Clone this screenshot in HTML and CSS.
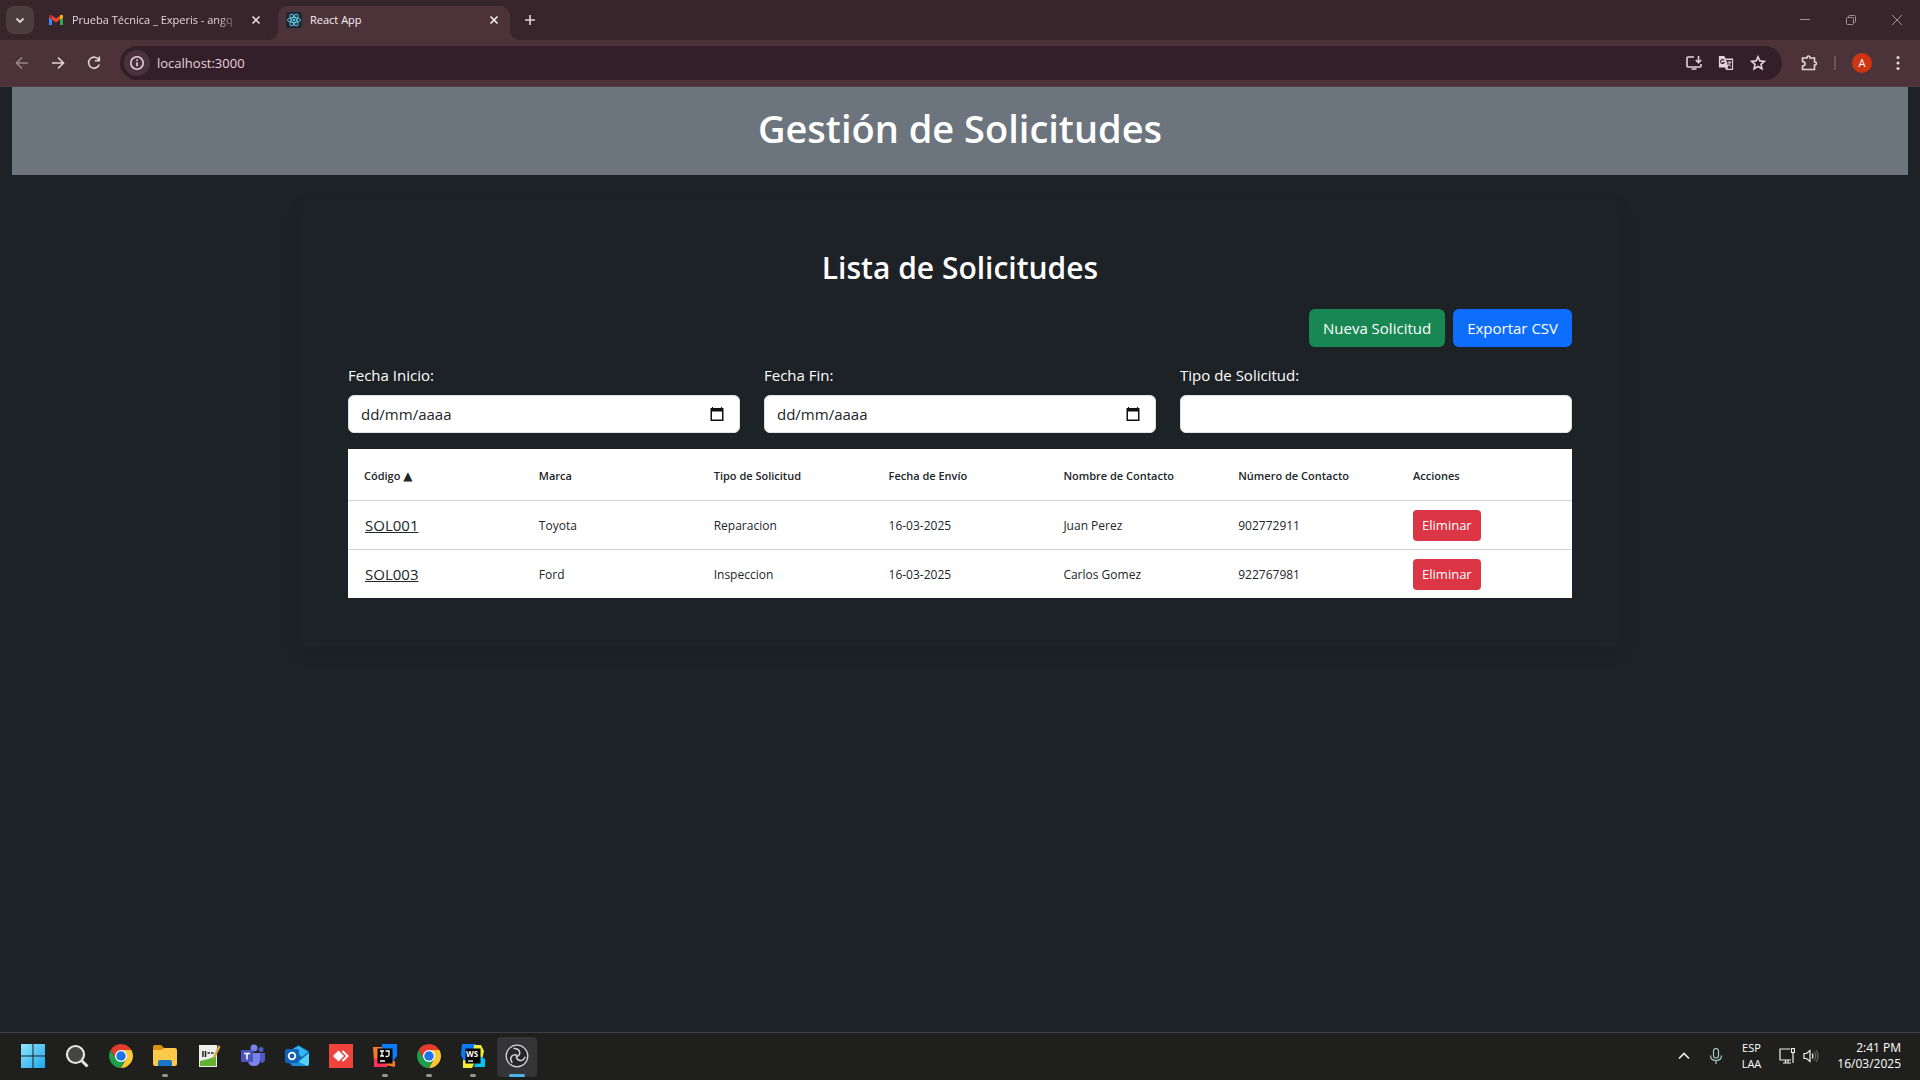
FILE: index.html
```html
<!DOCTYPE html>
<html lang="es">
<head>
<meta charset="utf-8">
<meta name="viewport" content="width=device-width, initial-scale=1">
<title>React App</title>
<link rel="stylesheet" href="styles.css">
</head>
<body>
<svg class="defs" aria-hidden="true">
  <symbol id="chrome" viewBox="0 0 48 48">
    <circle cx="24" cy="24" r="13" fill="#fff"/>
    <path d="M24 12H44.78A24 24 0 0 0 3.22 12L13.61 30A12 12 0 0 1 24 12Z" fill="#e33b2e"/>
    <path d="M13.61 30L3.22 12A24 24 0 0 0 24 48L34.39 30A12 12 0 0 1 13.61 30Z" fill="#1e9e4a"/>
    <path d="M34.39 30L24 48A24 24 0 0 0 44.78 12H24A12 12 0 0 1 34.39 30Z" fill="#fcc934"/>
    <circle cx="24" cy="24" r="9.5" fill="#1a73e8"/>
  </symbol>
  <symbol id="cross" viewBox="0 0 16 16"><path d="M4.5 4.500l7 7M11.500 4.500l-7 7" fill="none" stroke="currentColor" stroke-width="1.6"/></symbol>
  <symbol id="calendar" viewBox="0 0 16 16"><path d="M3 1h1v1h8V1h1v1h1.500v13h-13V2H3zM3 5.500v8h10v-8z" fill="#111" fill-rule="evenodd"/></symbol>
</svg>

<header class="browser">
  <div class="tabstrip">
    <button class="tab-search" aria-label="Buscar pestañas"><svg viewBox="0 0 16 16"><path d="M4.500 6.500L8 10l3.500-3.500" fill="none" stroke="currentColor" stroke-width="1.800"/></svg></button>
    <div class="tab tab-mail">
      <svg class="icon" viewBox="0 0 16 16"><path d="M1 4v9h3V7z" fill="#4285f4"/><path d="M15 4v9h-3V7z" fill="#34a853"/><path d="M4 3.500L8 6.500l4-3v4L8 10.500 4 7.500z" fill="#ea4335"/><path d="M1 4.500C1 2.500 3 2.500 4 3.500v4L1 5.500z" fill="#c5221f"/><path d="M15 4.500c0-2-2-2-3-1v4l3-2z" fill="#fbbc04"/></svg>
      <span class="tab-title fade">Prueba Técnica _ Experis - angq</span>
      <button class="tab-close" aria-label="Cerrar"><svg class="icon"><use href="#cross"/></svg></button>
    </div>
    <div class="tab tab-active">
      <svg class="icon" viewBox="0 0 16 16"><rect width="16" height="16" rx="2" fill="#1d2830"/><g fill="none" stroke="#61c7e0" stroke-width="1"><ellipse cx="8" cy="8" rx="6.500" ry="2.500"/><ellipse cx="8" cy="8" rx="6.500" ry="2.500" transform="rotate(60 8 8)"/><ellipse cx="8" cy="8" rx="6.500" ry="2.500" transform="rotate(120 8 8)"/></g><circle cx="8" cy="8" r="1.300" fill="#61c7e0"/></svg>
      <span class="tab-title">React App</span>
      <button class="tab-close" aria-label="Cerrar"><svg class="icon"><use href="#cross"/></svg></button>
    </div>
    <button class="new-tab" aria-label="Nueva pestaña"><svg class="icon" viewBox="0 0 16 16"><path d="M8 3v10M3 8h10" stroke="currentColor" stroke-width="1.600"/></svg></button>
    <div class="window-controls">
      <button aria-label="Minimizar"><svg viewBox="0 0 12 12"><path d="M1 5.500h10" stroke="currentColor"/></svg></button>
      <button aria-label="Restaurar"><svg viewBox="0 0 12 12"><path d="M3.500 3V2.500q0-1 1-1h5q1 0 1 1v5q0 1-1 1H9M2.500 3.500h5q1 0 1 1v5q0 1-1 1h-5q-1 0-1-1v-5q0-1 1-1z" fill="none" stroke="currentColor"/></svg></button>
      <button aria-label="Cerrar ventana"><svg viewBox="0 0 12 12"><path d="M1 1l10 10M11 1L1 11" stroke="currentColor"/></svg></button>
    </div>
  </div>
  <div class="toolbar">
    <button class="nav dim" aria-label="Atrás"><svg viewBox="0 0 16 16"><path d="M14 8H3M8 2.500L2.500 8 8 13.500"/></svg></button>
    <button class="nav" aria-label="Adelante"><svg viewBox="0 0 16 16"><path d="M2 8h11M8 2.500L13.500 8 8 13.500"/></svg></button>
    <button class="nav" aria-label="Recargar"><svg viewBox="0 0 16 16"><path d="M12.800 4.800A5.500 5.500 0 1 0 13.300 9.500M13.300 1.500v4.300H9"/></svg></button>
    <div class="omnibox">
      <button class="site-info" aria-label="Información del sitio"><svg viewBox="0 0 16 16"><circle cx="8" cy="8" r="6.200"/><path d="M8 7.300v4M8 4.500v1.500"/></svg></button>
      <input class="url" aria-label="Dirección" value="localhost:3000">
      <button class="nav" aria-label="Instalar"><svg viewBox="0 0 16 16"><path d="M8 2H2q-1 0-1 1v8q0 1 1 1h12q1 0 1-1V9M5.500 14h5M12.500 1v6.500M9.800 5l2.700 2.700L15.200 5"/></svg></button>
      <button class="nav" aria-label="Traducir"><svg viewBox="0 0 18 16"><path d="M1 0h6l1.500 3H17v13H9l-1-3H1z" fill="#e6d3d9" stroke="none"/><path d="M9 4.500h6.800v10H10.500L11.500 12z" fill="#36212b" stroke="none"/><path d="M6.800 5A2.200 2.200 0 1 0 7 7.500H5" stroke="#36212b" stroke-width="1.200"/><path d="M10.500 7h4.500M12.700 6v1M14 7q-1 3-3 4.500M11.500 8.500l3 3.500" stroke-width="1.100"/></svg></button>
      <button class="nav" aria-label="Favorito"><svg viewBox="0 0 16 16"><path d="M8 1.800l1.900 4.100 4.500.5-3.400 3 1 4.400L8 11.500l-4 2.300 1-4.400-3.400-3 4.500-.5z"/></svg></button>
    </div>
    <button class="nav ext" aria-label="Extensiones"><svg viewBox="0 0 16 16"><path d="M1.500 3H6q0-2 1.500-2T9 3h4.500v4Q15.500 7 15.500 8.500T13.500 10v4.500h-12V11q2.500 0 2.500-2.200T1.500 6.500z"/></svg></button>
    <span class="divider"></span>
    <button class="avatar" aria-label="Perfil">A</button>
    <button class="nav menu" aria-label="Menú"><svg viewBox="0 0 16 16"><g fill="#e6d3d9" stroke="none"><circle cx="8" cy="2.500" r="1.600"/><circle cx="8" cy="8" r="1.600"/><circle cx="8" cy="13.500" r="1.600"/></g></svg></button>
  </div>
</header>

<main class="page">
  <h1 class="banner">Gestión de Solicitudes</h1>
  <section class="panel">
    <h2 class="panel-title">Lista de Solicitudes</h2>
    <div class="actions">
      <button class="btn btn-success">Nueva Solicitud</button>
      <button class="btn btn-primary">Exportar CSV</button>
    </div>
    <form class="filters">
      <div class="field">
        <label for="inicio">Fecha Inicio:</label>
        <div class="control"><input id="inicio" type="text" placeholder="dd/mm/aaaa"><button type="button" aria-label="Abrir calendario"><svg class="icon"><use href="#calendar"/></svg></button></div>
      </div>
      <div class="field">
        <label for="fin">Fecha Fin:</label>
        <div class="control"><input id="fin" type="text" placeholder="dd/mm/aaaa"><button type="button" aria-label="Abrir calendario"><svg class="icon"><use href="#calendar"/></svg></button></div>
      </div>
      <div class="field">
        <label for="tipo">Tipo de Solicitud:</label>
        <div class="control"><input id="tipo" type="text"></div>
      </div>
    </form>
    <table class="requests">
      <thead>
        <tr><th>Código <span class="sort">▲</span></th><th>Marca</th><th>Tipo de Solicitud</th><th>Fecha de Envío</th><th>Nombre de Contacto</th><th>Número de Contacto</th><th>Acciones</th></tr>
      </thead>
      <tbody>
        <tr><td><a href="#SOL001">SOL001</a></td><td>Toyota</td><td>Reparacion</td><td>16-03-2025</td><td>Juan Perez</td><td>902772911</td><td class="cell-action"><button class="btn-delete">Eliminar</button></td></tr>
        <tr><td><a href="#SOL003">SOL003</a></td><td>Ford</td><td>Inspeccion</td><td>16-03-2025</td><td>Carlos Gomez</td><td>922767981</td><td class="cell-action"><button class="btn-delete">Eliminar</button></td></tr>
      </tbody>
    </table>
  </section>
</main>

<footer class="taskbar">
  <nav class="apps">
    <button class="app" aria-label="Inicio"><svg viewBox="0 0 24 24"><defs><linearGradient id="win" x2="1" y2="1"><stop stop-color="#8fe6fb"/><stop offset="1" stop-color="#1ea5ee"/></linearGradient></defs><path d="M0 0h11.500v11.500H0zM12.500 0H24v11.500H12.500zM0 12.500h11.500V24H0zM12.500 12.500H24V24H12.500z" fill="url(#win)"/></svg></button>
    <button class="app" aria-label="Buscar"><svg viewBox="0 0 24 24"><circle cx="10.500" cy="10.500" r="8.500" fill="#454544" stroke="#e8e6e2" stroke-width="2.200"/><path d="M17 17l5.500 5.500" stroke="#e8e6e2" stroke-width="3"/></svg></button>
    <button class="app" aria-label="Chrome"><svg><use href="#chrome"/></svg></button>
    <button class="app open" aria-label="Explorador"><svg viewBox="0 0 24 24"><path d="M0 3q0-2 2-2h6l3 3h11v6H0z" fill="#d9930f"/><path d="M0 6h9l2-2h11q2 0 2 2v14q0 2-2 2H2q-2 0-2-2z" fill="#fcca4b"/><path d="M5 22v-4q0-2 2-2h10q2 0 2 2v4z" fill="#1975c5"/></svg></button>
    <button class="app" aria-label="Notepad++"><svg viewBox="0 0 24 24"><path d="M2 1h18v22H2z" fill="#eeeeea"/><path d="M3 17q8-1 16-5v10H3z" fill="#62b22f"/><path d="M6 7v6M8.500 7v6M10.500 9h2.500M14 9h2.500" stroke="#222" stroke-width="1.500"/><path d="M21.500 1L16.500 12l-.5 3 2.500-2L23.500 3z" fill="#d6a83c"/></svg></button>
    <button class="app" aria-label="Teams"><svg viewBox="0 0 24 24"><circle cx="13" cy="4" r="3.500" fill="#7b83eb"/><circle cx="20" cy="5.500" r="2.500" fill="#5059c9"/><path d="M17 9h7v6q0 4-4 4z" fill="#5059c9"/><path d="M7 9h12v7q0 6-6 6t-6-6z" fill="#7b83eb"/><rect y="6" width="12" height="12" rx="1" fill="#4b53bc"/><path d="M3 9.500h6M6 9.500v6" stroke="#fff" stroke-width="1.600"/></svg></button>
    <button class="app" aria-label="Outlook"><svg viewBox="0 0 24 24"><path d="M4 7l9-6 11 6v13H4z" fill="#1366ae"/><path d="M8 5l6-3 9 6-6 5z" fill="#35b8f1"/><path d="M8 22l16-13v11q0 2-2 2z" fill="#50d1f5"/><path d="M8 15l14 7H8q-2 0-2-2z" fill="#1c8edb"/><rect y="5" width="14" height="14" rx="2" fill="#0f62b8"/><circle cx="7" cy="12" r="3.300" fill="none" stroke="#fff" stroke-width="1.800"/></svg></button>
    <button class="app" aria-label="AnyDesk"><svg viewBox="0 0 24 24"><path d="M0 0h24v24H0z" fill="#ef443b"/><path d="M9.500 6.500L15 12l-5.500 5.500L4 12z" fill="#fff"/><path d="M13.500 7l5 5-5 5" fill="none" stroke="#fff" stroke-width="2"/></svg></button>
    <button class="app open" aria-label="IntelliJ IDEA"><svg viewBox="0 0 24 24"><path d="M0 3l10 0 1 9-6 7-4-2z" fill="#f97a2b"/><path d="M9 0h15v12l-6 8-9-9z" fill="#087cfa"/><path d="M1 14l14 2-1 7H1z" fill="#fe315d"/><path d="M15 17h7v6l-9-2z" fill="#f97a2b"/><path d="M4.500 4.500h15v15h-15z" fill="#000"/><path d="M7 7h4M9 7v5M7 12h4M12.500 7H16v4q0 1.500-2 1.500h-1.500M7 17h5" fill="none" stroke="#fff" stroke-width="1.300"/></svg></button>
    <button class="app open" aria-label="Chrome"><svg><use href="#chrome"/></svg></button>
    <button class="app open" aria-label="WebStorm"><svg viewBox="0 0 24 24"><path d="M1 0h14l-3 15-8 4-4-8z" fill="#087cfa"/><path d="M13 1l7 0 3 6-2 9-9-3z" fill="#f0ec38"/><path d="M17 11l7 4v8H13z" fill="#07c3f2"/><path d="M2 16l12 2-3 6H2z" fill="#f0ec38"/><path d="M4.500 4.500h15v15h-15z" fill="#000"/><text x="5" y="12.500" font-size="8" fill="#fff">WS</text><path d="M7 17h5" stroke="#fff" stroke-width="1.300"/></svg></button>
    <button class="app active" aria-label="OBS Studio"><svg viewBox="0 0 24 24"><circle cx="12" cy="12" r="10.800" fill="#25252b" stroke="#d6d4d4" stroke-width="1.300"/><g fill="none" stroke="#d6d4d4" stroke-width="1.500"><path id="arm" d="M12 12.500Q15.500 11 14.500 7.500T8.500 4.500"/><use href="#arm" transform="rotate(120 12 12)"/><use href="#arm" transform="rotate(240 12 12)"/></g></svg></button>
  </nav>
  <div class="tray">
    <button class="tray-btn" aria-label="Iconos ocultos"><svg viewBox="0 0 16 16"><path d="M3 10.500L8 5.500l5 5" stroke-width="1.600"/></svg></button>
    <button class="tray-btn mic" aria-label="Micrófono"><svg viewBox="0 0 16 16"><rect x="5.500" y=".5" width="5" height="9.500" rx="2.500"/><path d="M2.500 7.500q0 5 5.500 5t5.500-5M8 12.500V16"/></svg></button>
    <span class="lang">ESP<br>LAA</span>
    <button class="tray-btn" aria-label="Red"><svg viewBox="0 0 16 16"><path d="M11 1H1v11h11M4 15h8M6.500 12v3M9 12v3M12.500.5h3v4h-3zM14 4.500V15"/></svg></button>
    <button class="tray-btn" aria-label="Volumen"><svg viewBox="0 0 16 16"><path d="M1 5.500h2.500L7 2.500v11l-3.500-3H1zM9 5.500q2 2.500 0 5"/><path d="M11 3.500q3.500 4.500 0 9M13 2q4 6 0 12" stroke="#66655f"/></svg></button>
    <time class="clock" datetime="2025-03-16T14:41">2:41 PM<br>16/03/2025</time>
  </div>
</footer>
</body>
</html>
```
FILE: styles.css
```css
* { box-sizing: border-box; }
body {
  margin: 0;
  min-height: 100vh;
  display: flex;
  flex-direction: column;
  background: #1d2226;
  color: #fff;
  font-family: "Open Sans", "Noto Sans", sans-serif;
  font-size: 15px;
  line-height: 24px;
}
button, input { font: inherit; color: inherit; }
button { display: flex; align-items: center; justify-content: center; padding: 0; border: 0; background: none; }
svg { display: block; flex: none; }
.defs { display: none; }
.icon { width: 16px; height: 16px; }

/* Browser window */
.browser { color: #e6d3d9; }
.tabstrip { display: flex; align-items: center; height: 40px; padding-left: 6px; background: #36252a; font-size: 11px; }
.tab-search { width: 28px; height: 28px; border-radius: 8px; background: #4b3d3d; }
.tab-search svg { width: 16px; height: 16px; }
.tab { display: flex; align-items: center; gap: 8px; height: 34px; }
.tab-mail { width: 226px; margin-left: 14px; }
.tab-title { flex: 1; overflow: hidden; white-space: nowrap; }
.tab-mail .tab-title { flex: none; width: 168px; }
.fade { mask-image: linear-gradient(90deg, #000 86%, transparent); }
.tab-active { position: relative; align-self: flex-end; width: 232px; margin-left: 4px; padding: 0 8px 6px; border-radius: 10px 10px 0 0; background: #4c333a; color: #fbeff2; }
.tab-active::before, .tab-active::after { content: ""; position: absolute; bottom: 0; width: 10px; height: 10px; }
.tab-active::before { right: 100%; background: radial-gradient(circle at 0 0, transparent 10px, #4c333a 10px); }
.tab-active::after { left: 100%; background: radial-gradient(circle at 100% 0, transparent 10px, #4c333a 10px); }
.new-tab { width: 28px; height: 28px; margin-left: 6px; }
.window-controls { display: flex; margin-left: auto; color: #a28d94; }
.window-controls button { width: 46px; height: 40px; }
.window-controls svg { width: 12px; height: 12px; }
.toolbar { display: flex; align-items: center; height: 47px; padding: 0 4px; background: #4c333a; border-bottom: 1px solid #51403f; }
.nav { width: 36px; height: 32px; }
.nav svg, .site-info svg { width: 16px; height: 16px; fill: none; stroke: #e6d3d9; stroke-width: 1.6; }
.dim { opacity: 0.5; }
.omnibox { flex: 1; display: flex; align-items: center; height: 34px; margin-left: 8px; padding: 0 8px 0 4px; border-radius: 17px; background: #331f29; }
.omnibox .nav { width: 32px; }
.site-info { width: 26px; height: 26px; border-radius: 13px; background: #49323b; }
.url { flex: 1; min-width: 0; padding: 0 7px; border: 0; background: none; font-size: 13px; }
.ext { margin-left: 9px; }
.divider { width: 2px; height: 14px; margin: 0 16px 0 7px; background: #6e5260; }
.avatar { width: 20px; height: 20px; border-radius: 10px; background: #cf3412; color: #fff; font-size: 11px; }
.menu { margin-left: 8px; }

/* Page */
.page { flex: 1; padding: 0 12px; }
.banner { margin: 0; padding: 17px 0 23px; background: #6c757d; font-size: 38px; font-weight: 600; line-height: 48px; text-align: center; }
.panel { max-width: 1320px; margin: 24px auto; padding: 50px 48px 48px; box-shadow: 0 8px 16px rgba(0, 0, 0, 0.08); }
.panel-title { margin: 0 0 22px; font-size: 30px; font-weight: 600; line-height: 38px; text-align: center; }
.actions { display: flex; justify-content: flex-end; gap: 8px; margin-bottom: 16px; }
.btn { height: 38px; padding: 0 14px; border-radius: 6px; }
.btn-success { background: #198754; }
.btn-primary { background: #0d6efd; }
.filters { display: grid; grid-template-columns: repeat(3, 1fr); gap: 24px; margin-bottom: 16px; }
.field label { display: block; margin-bottom: 8px; }
.control { display: flex; align-items: center; height: 38px; padding: 0 14px 0 12px; border: 1px solid #dee2e6; border-radius: 6px; background: #fff; color: #212529; }
.control input { flex: 1; min-width: 0; padding: 0; border: 0; outline: 0; background: none; }
.control input::placeholder { color: #212529; opacity: 1; }
.requests { width: 100%; table-layout: fixed; border-spacing: 0; background: #fff; color: #212529; font-size: 12px; text-align: left; }
.requests th { height: 51px; padding: 2px 16px 0; font-size: 11px; font-weight: 600; white-space: nowrap; }
.requests td { height: 49px; padding: 1px 16px 0; border-top: 1px solid #d4d4d6; }
.requests .cell-action { padding: 0 16px; }
.requests a { padding-left: 1px; color: inherit; font-size: 15px; }
.sort { font-family: "DejaVu Sans", sans-serif; font-size: 12px; line-height: 1; }
.btn-delete { height: 31px; padding: 0 9px; border-radius: 4px; background: #dc3545; color: #fff; font-size: 13px; }

/* Desktop taskbar */
.taskbar { display: flex; justify-content: space-between; height: 48px; padding: 0 19px 0 11px; border-top: 1px solid #3e3d45; background: #1f1f1e; }
.apps { display: flex; align-items: center; }
.app { width: 40px; height: 40px; margin: 0 2px; border-radius: 4px; display: grid; grid-template-rows: 1fr 3px; justify-items: center; align-items: center; padding-top: 2px; }
.app svg { width: 24px; height: 24px; }
.app text { font-family: "Open Sans", sans-serif; font-weight: 700; }
.app::after { content: ""; width: 6px; height: 3px; border-radius: 2px; }
.open::after { background: #96959a; }
.active { background: #353538; }
.active::after { width: 16px; background: #4cb5e8; }
.tray { display: flex; align-items: center; padding-bottom: 2px; font-size: 12px; line-height: 16px; }
.tray-btn { width: 24px; height: 40px; }
.tray-btn svg { width: 16px; height: 16px; fill: none; stroke: #f0efe8; stroke-width: 1.2; }
.mic { margin-left: 8px; }
.mic svg { stroke: #a6c9c9; }
.lang { margin: 0 14px; font-size: 11px; text-align: center; }
.clock { margin-left: 14px; text-align: right; }
```
